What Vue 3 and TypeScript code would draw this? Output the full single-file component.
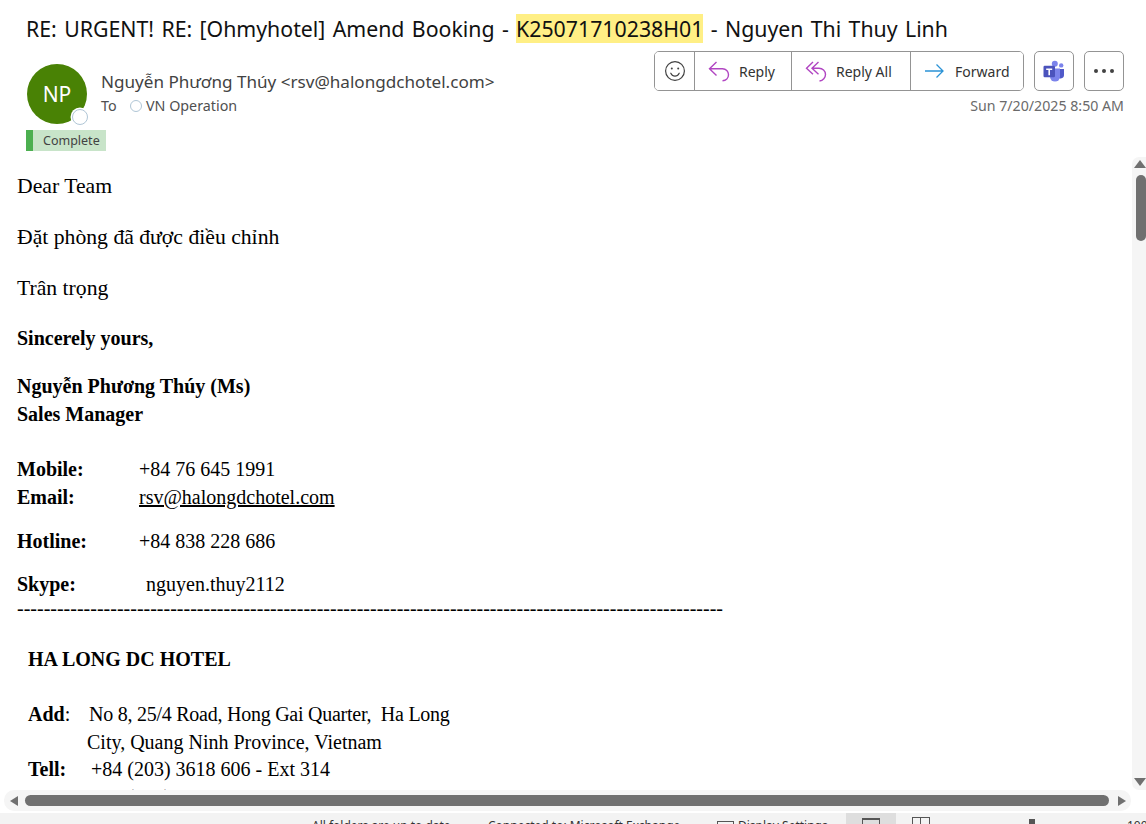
<script setup lang="ts">
const contacts = [
  { label: "Mobile:", value: "+84 76 645 1991" },
  { label: "Email:", value: "rsv@halongdchotel.com", link: true },
];
const dashes = "-".repeat(106);
</script>

<template>
  <div class="window">
    <header class="head">
      <h1 class="subject">
        RE: URGENT! RE: [Ohmyhotel] Amend Booking -
        <mark>K25071710238H01</mark>
        - Nguyen Thi Thuy Linh
      </h1>
      <div class="meta">
        <div class="sender">
          <div class="avatar">
            NP
            <span class="presence"></span>
          </div>
          <div class="who">
            <div class="from">Nguyễn Phương Thúy &lt;rsv@halongdchotel.com&gt;</div>
            <div class="to">
              <span class="to-label">To</span>
              <span class="dot"></span>
              <span>VN Operation</span>
            </div>
          </div>
        </div>
        <div class="actions">
          <div class="buttons">
            <div class="group">
              <button class="btn btn-emoji" aria-label="React">
                <svg width="22" height="22" viewBox="0 0 22 22" fill="none" stroke="#424242" stroke-width="1.2">
                  <circle cx="11" cy="11" r="9.4" />
                  <path d="M6.8 13.2c1 2 2.5 3 4.2 3s3.200-1 4.200-3" stroke-linecap="round" />
                  <circle cx="7.800" cy="8.600" r="1" fill="#424242" stroke="none" />
                  <circle cx="14.200" cy="8.600" r="1" fill="#424242" stroke="none" />
                </svg>
              </button>
              <button class="btn btn-reply">
                <svg width="22" height="22" viewBox="0 0 22 22" fill="none" stroke="#b146c2" stroke-width="1.400">
                  <path d="M8.500 2 1.500 8.800l7 6.700M1.500 8.800H14.500c3.500 0 6 2.600 6 6 0 3.200-2.500 5.700-6 6" />
                </svg>
                Reply
              </button>
              <button class="btn btn-all">
                <svg width="22" height="22" viewBox="0 0 22 22" fill="none" stroke="#b146c2" stroke-width="1.400">
                  <path d="M8 2 1.500 8.300l6.500 6M13.500 2 7 8.300l6.500 6M7 8.300H14c3.500 0 6.500 2.500 6.500 6.200 0 3-2.500 6-6 6.500" />
                </svg>
                Reply All
              </button>
              <button class="btn btn-forward">
                <svg width="20" height="20" viewBox="0 0 20 20" fill="none" stroke="#2b93d6" stroke-width="1.300">
                  <path d="M1 10h18M12.500 3.500 19 10l-6.500 6.500" />
                </svg>
                Forward
              </button>
            </div>
            <button class="btn btn-square btn-teams" aria-label="Teams">
              <svg width="22" height="22" viewBox="0 0 22 22">
                <circle cx="18.200" cy="5.400" r="2.200" fill="#7b83eb" />
                <path d="M14.500 9h6.500v6.200a3.300 3.300 0 0 1-5 2.800z" fill="#5059c9" />
                <circle cx="11.800" cy="3.800" r="3" fill="#7b83eb" />
                <path d="M7 8.600h10v8a5 5 0 0 1-10 0z" fill="#7b83eb" />
                <rect x="0.500" y="5.800" width="11.500" height="11.500" rx="1.200" fill="#4b53bc" />
                <path d="M3.200 8.500h6v1.400H7v5.400H5.400V9.900H3.200z" fill="#fff" />
              </svg>
            </button>
            <button class="btn btn-square" aria-label="More">
              <span class="more"><i></i><i></i><i></i></span>
            </button>
          </div>
          <div class="date">Sun 7/20/2025 8:50 AM</div>
        </div>
      </div>
      <div class="tag"><span class="tag-bar"></span><span class="tag-text">Complete</span></div>
    </header>

    <div class="middle">
      <main class="mail">
        <p class="big first">Dear Team</p>
        <p class="big">Đặt phòng đã được điều chỉnh</p>
        <p class="big">Trân trọng</p>
        <p class="sign"><b>Sincerely yours,</b></p>
        <p class="name"><b>Nguyễn Phương Thúy (Ms)</b><br /><b>Sales Manager</b></p>
        <div class="contacts">
          <div v-for="c in contacts" :key="c.label" class="contact">
            <b>{{ c.label }}</b>
            <u v-if="c.link">{{ c.value }}</u>
            <span v-else>{{ c.value }}</span>
          </div>
        </div>
        <div class="contact hotline"><b>Hotline:</b><span>+84 838 228 686</span></div>
        <div class="contact skype"><b>Skype:</b><span class="skype-id">nguyen.thuy2112</span></div>
        <div class="dashes">{{ dashes }}</div>
        <div class="hotel">
          <p class="hotel-name"><b>HA LONG DC HOTEL</b></p>
          <div class="addr"><span class="addr-label"><b>Add</b>:</span><span class="addr-one">No 8, 25/4 Road, Hong Gai Quarter,&nbsp; Ha Long</span></div>
          <div class="addr"><span class="addr-label"></span><span class="addr-two">City, Quang Ninh Province, Vietnam</span></div>
          <div class="addr"><span class="addr-label"><b>Tell:</b></span><span class="addr-three">+84 (203) 3618 606 - Ext 314</span></div>
          <div class="addr"><span class="addr-label"><b>Fax:</b></span><span class="addr-three">+84 (203) 3618 606</span></div>
        </div>
      </main>
      <div class="vbar">
        <span class="arrow-up"></span>
        <span class="vthumb"></span>
        <span class="arrow-down"></span>
      </div>
    </div>

    <div class="hbar">
      <span class="arrow-left"></span>
      <span class="hthumb"></span>
      <span class="arrow-right"></span>
    </div>

    <footer class="status">
      <span class="st-a">All folders are up to date.</span>
      <span class="st-b">Connected to: Microsoft Exchange</span>
      <span class="st-box"></span>
      <span class="st-c">Display Settings</span>
      <span class="view active"><i class="view-ico"></i></span>
      <span class="view"><i class="view-book"></i></span>
      <span class="knob"></span>
      <span class="st-zoom">100%</span>
    </footer>
  </div>
</template>

<style>
html,
body {
  margin: 0;
  background: #fff;
}
</style>

<style scoped>
.window {
  width: 1146px;
  height: 824px;
  display: flex;
  flex-direction: column;
  overflow: hidden;
  background: #fff;
  font-family: "Noto Sans", "Open Sans", sans-serif;
}

.head {
  height: 157px;
  flex: none;
  padding-left: 26px;
  box-sizing: border-box;
  position: relative;
}

.subject {
  margin: 0;
  padding-top: 13px;
  height: 31px;
  font-size: 21.300px;
  word-spacing: 1.800px;
  line-height: 31px;
  font-weight: 400;
  color: #111;
  white-space: nowrap;
  box-sizing: content-box;
}

.subject mark {
  background: #ffef85;
  color: inherit;
}

.meta {
  display: flex;
  justify-content: space-between;
  padding-right: 22px;
  margin-top: 7px;
}

.sender {
  display: flex;
  padding-top: 13px;
  padding-left: 1px;
}

.avatar {
  width: 60px;
  height: 60px;
  border-radius: 50%;
  background: #498205;
  color: #fff;
  font-size: 21px;
  line-height: 60px;
  text-align: center;
  position: relative;
  flex: none;
}

.presence {
  position: absolute;
  right: -1px;
  bottom: -1px;
  width: 14px;
  height: 14px;
  border-radius: 50%;
  background: #fff;
  border: 1px solid #b0c6d6;
  box-shadow: 0 0 0 1.500px #fff;
}

.who {
  margin-left: 14px;
  color: #424242;
}

.from {
  font-size: 17.100px;
  line-height: 24px;
  padding-top: 6px;
  white-space: nowrap;
}

.to {
  display: flex;
  align-items: center;
  font-size: 14.300px;
  line-height: 22px;
  margin-top: 1px;
  color: #505050;
}

.to-label {
  width: 29px;
}

.dot {
  width: 10px;
  height: 10px;
  border-radius: 50%;
  border: 1px solid #b0c6d6;
  margin-right: 4px;
}

.actions {
  display: flex;
  flex-direction: column;
  align-items: flex-end;
}

.buttons {
  display: flex;
  gap: 10px;
  height: 40px;
}

.group {
  display: flex;
  border: 1px solid #949494;
  border-radius: 5px;
  overflow: hidden;
}

.btn {
  display: flex;
  align-items: center;
  background: #fff;
  border: 0;
  padding: 0;
  margin: 0;
  font: inherit;
  font-size: 14px;
  color: #333;
}

.group .btn + .btn {
  border-left: 1px solid #949494;
}

.btn-emoji {
  width: 39px;
  justify-content: center;
}

.btn-reply {
  width: 97px;
  gap: 9px;
  padding-left: 13px;
  box-sizing: border-box;
}

.btn-all {
  width: 119px;
  gap: 9px;
  padding-left: 13px;
  box-sizing: border-box;
}

.btn-forward {
  width: 113px;
  gap: 11px;
  padding-left: 13px;
  box-sizing: border-box;
}

.btn-square {
  width: 40px;
  height: 40px;
  box-sizing: border-box;
  border: 1px solid #949494;
  border-radius: 5px;
  justify-content: center;
}

.more {
  display: flex;
  gap: 4px;
}

.more i {
  width: 4px;
  height: 4px;
  border-radius: 50%;
  background: #424242;
}

.date {
  font-size: 14.200px;
  line-height: 20px;
  margin-top: 5px;
  color: #6a6a6a;
  white-space: nowrap;
}

.tag {
  position: absolute;
  left: 26px;
  top: 130px;
  height: 21px;
  display: flex;
  width: 80px;
  background: #c8e4c9;
}

.tag-bar {
  width: 7px;
  background: #4caf50;
}

.tag-text {
  font-size: 12.500px;
  line-height: 21px;
  padding-left: 10px;
  color: #424242;
}

.middle {
  flex: 1;
  min-height: 0;
  display: flex;
}

.mail {
  flex: 1;
  min-width: 0;
  overflow: hidden;
  padding-left: 17px;
  color: #000;
  font-family: "Liberation Serif", "Times New Roman", serif;
  font-size: 20px;
  line-height: 28px;
}

.mail p {
  margin: 0;
}

.big {
  font-size: 21.700px;
  line-height: 30px;
  margin-top: 21px !important;
}

.big.first {
  margin-top: 14px !important;
}

.sign {
  margin-top: 21px !important;
}

.name {
  margin-top: 20px !important;
}

.contacts {
  margin-top: 27px;
}

.contact {
  display: flex;
}

.contact b {
  width: 122px;
  flex: none;
}

.hotline {
  margin-top: 16px;
}

.skype {
  margin-top: 15px;
}

.skype-id {
  padding-left: 7px;
}

.dashes {
  line-height: 20px;
  margin-top: 0;
  white-space: nowrap;
}

.hotel {
  padding-left: 11px;
  margin-top: 27px;
}

.hotel-name {
  margin-bottom: 27px !important;
}

.addr {
  display: flex;
  height: 27.500px;
}

.addr-label {
  width: 58px;
  flex: none;
}

.addr-one {
  padding-left: 3px;
  letter-spacing: -0.250px;
}

.addr-two {
  padding-left: 1px;
}

.addr-three {
  padding-left: 5px;
}

.vbar {
  width: 14px;
  flex: none;
  background: #f5f5f5;
  border-radius: 7px 0 0 7px;
  position: relative;
}

.arrow-up,
.arrow-down {
  position: absolute;
  left: 2px;
  width: 0;
  height: 0;
  border-left: 6px solid transparent;
  border-right: 6px solid transparent;
}

.arrow-up {
  top: 3px;
  border-bottom: 8px solid #707070;
}

.arrow-down {
  bottom: 4px;
  border-top: 8px solid #707070;
}

.vthumb {
  position: absolute;
  top: 18px;
  right: 0;
  width: 10px;
  height: 66px;
  border-radius: 5px;
  background: #707070;
}

.hbar {
  flex: none;
  height: 21px;
  margin: 0 15px 2px 4px;
  background: #f5f5f5;
  border-radius: 10px;
  display: flex;
  align-items: center;
  padding: 0 5px 0 6px;
}

.hthumb {
  flex: 1;
  height: 11px;
  margin: 0 9px 0 7px;
  border-radius: 6px;
  background: #707070;
}

.arrow-left,
.arrow-right {
  width: 0;
  height: 0;
  border-top: 5.500px solid transparent;
  border-bottom: 5.500px solid transparent;
}

.arrow-left {
  border-right: 8px solid #707070;
}

.arrow-right {
  border-left: 8px solid #707070;
}

.status {
  flex: none;
  height: 11px;
  background: #f3f3f3;
  display: flex;
  font-size: 12px;
  line-height: 16px;
  color: #333;
  overflow: hidden;
  white-space: nowrap;
  padding-left: 312px;
  box-sizing: border-box;
}

.status span {
  flex: none;
}

.st-a {
  padding-top: 5px;
  width: 176px;
}

.st-b {
  padding-top: 5px;
  width: 229px;
}

.st-box {
  width: 17px;
  height: 16px;
  margin-top: 8px;
  border: 1px solid #555;
  box-sizing: border-box;
}

.st-c {
  padding: 5px 0 0 4px;
  width: 108px;
}

.view {
  width: 50px;
  position: relative;
}

.view.active {
  background: #dedede;
}

.view-ico,
.view-book {
  position: absolute;
  left: 16px;
  top: 5px;
  width: 18px;
  height: 10px;
  border: 1px solid #555;
  border-top-width: 2px;
  box-sizing: border-box;
}

.view-book {
  top: 4px;
  border-top-width: 1px;
}

.view-book::after {
  content: "";
  position: absolute;
  left: 7px;
  top: 0;
  width: 1px;
  height: 10px;
  background: #555;
}

.knob {
  width: 6px;
  height: 8px;
  margin: 6px 0 0 83px;
  background: #555;
}

.st-zoom {
  padding: 5px 0 0 92px;
}
</style>
